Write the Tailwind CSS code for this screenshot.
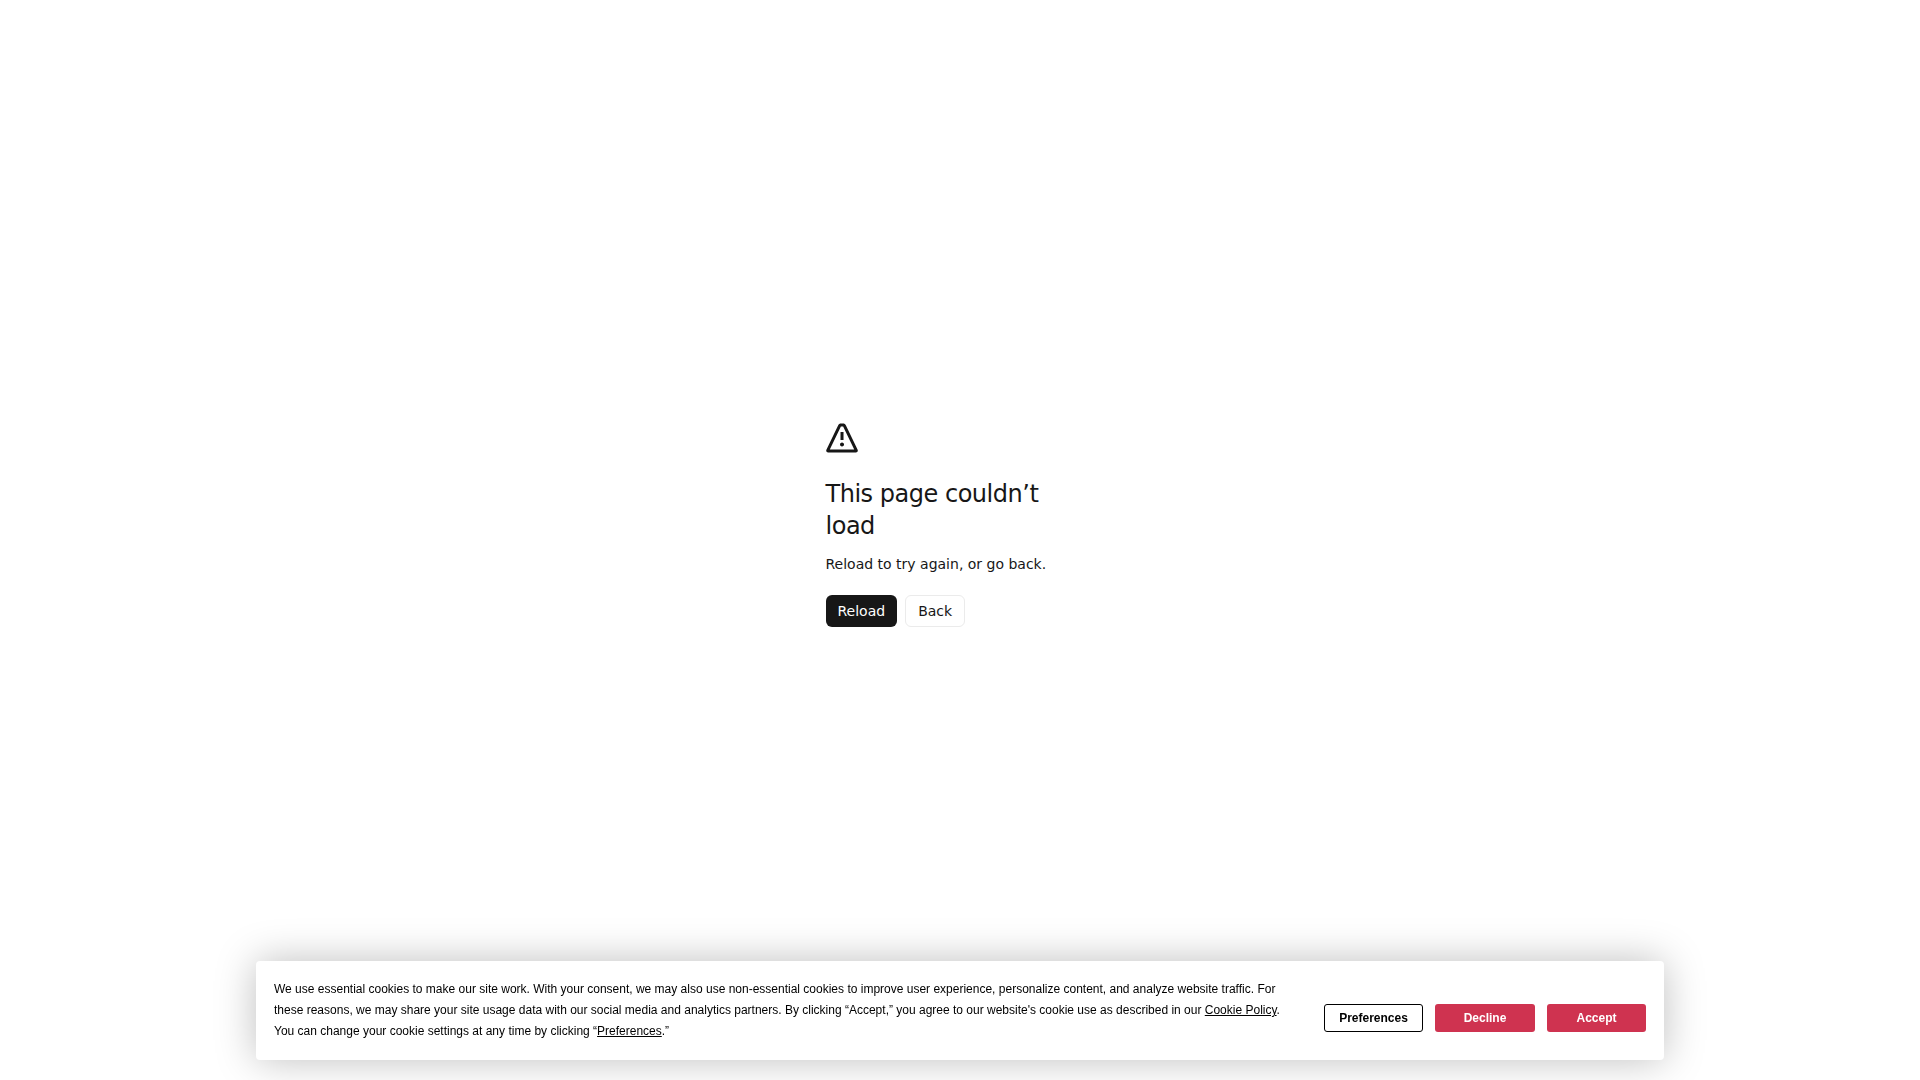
<!DOCTYPE html>
<html lang="en">
<head>
<meta charset="utf-8">
<meta name="viewport" content="width=device-width, initial-scale=1">
<title>This page couldn’t load</title>
<script src="https://cdn.jsdelivr.net/npm/@tailwindcss/browser@4"></script>
</head>
<body class="bg-white text-[#171717]">
<main class="flex min-h-screen items-center justify-center pb-8 font-['DejaVu_Sans',sans-serif]">
  <div class="flex w-[269px] flex-col items-start">
    <svg class="mb-6 size-8" viewBox="-0.2 -1.5 32 32" fill="none" aria-hidden="true">
      <path fill="#171717" fill-rule="evenodd" clip-rule="evenodd" d="M16.9328 0C18.0839 0 19.1334 0.6588 19.634 1.6953L31.4299 26.1309C32.0708 27.4588 31.1036 29 29.6291 29H2.0022C0.5275 29 -0.4396 27.4588 0.2014 26.1309L11.9973 1.6953C12.4979 0.6588 13.5474 0 14.6984 0H16.9328ZM3.5949 26H28.0363L16.9328 3H14.6984L3.5949 26ZM15.8156 19C16.9202 19 17.8156 19.8954 17.8156 21C17.8156 22.1046 16.9202 23 15.8156 23C14.711 23 13.8156 22.1046 13.8156 21C13.8156 19.8954 14.711 19 15.8156 19ZM17.3156 16.5H14.3156V8.5H17.3156V16.5Z"/>
    </svg>
    <h1 class="mb-3 text-2xl/8 font-medium tracking-[-0.02em]">This page couldn’t load</h1>
    <p class="mb-5 text-sm/[21px]">Reload to try again, or go back.</p>
    <div class="flex gap-2">
      <button type="button" class="h-8 rounded-md bg-[#171717] px-3 text-sm font-medium text-white">Reload</button>
      <button type="button" class="h-8 rounded-md border border-[#ebebeb] bg-white px-3 text-sm font-medium">Back</button>
    </div>
  </div>
</main>
<section aria-label="Cookie consent" class="fixed inset-x-0 bottom-5 mx-auto flex w-11/12 max-w-[1408px] items-center justify-between gap-10 rounded bg-white p-[18px] font-['Liberation_Sans',Arial,sans-serif] text-xs text-black shadow-[0_0_40px_rgba(0,0,0,0.26)] will-change-transform">
  <p class="max-w-[1014px] text-xs/[21px]">We use essential cookies to make our site work. With your consent, we may also use non-essential cookies to improve user experience, personalize content, and analyze website traffic. For these reasons, we may share your site usage data with our social media and analytics partners. By clicking “Accept,” you agree to our website's cookie use as described in our <a href="#" class="underline">Cookie Policy</a>. You can change your cookie settings at any time by clicking “<a href="#" class="underline">Preferences</a>.”</p>
  <div class="flex shrink-0 gap-3 pt-[15px] font-bold">
    <button type="button" class="h-7 w-[99px] rounded-[3px] border border-black bg-white">Preferences</button>
    <button type="button" class="h-7 w-[100px] rounded-[3px] bg-[#cf3350] text-white">Decline</button>
    <button type="button" class="h-7 w-[99px] rounded-[3px] bg-[#cf3350] text-white">Accept</button>
  </div>
</section>
</body>
</html>
